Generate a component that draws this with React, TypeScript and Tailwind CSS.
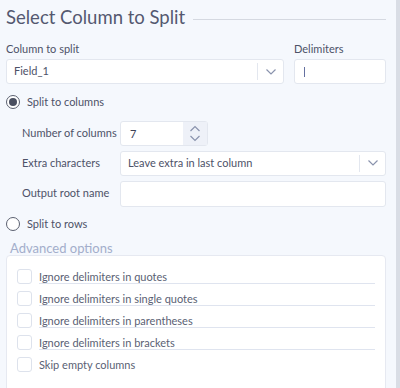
import React from "react";

const font = { fontFamily: 'Lato, "Open Sans", sans-serif' };

function Chevron() {
  return (
    <svg width="12" height="8" viewBox="0 0 12 8" fill="none">
      <path d="M1.5 1.5 L6 6 L10.5 1.5" stroke="#8a93ad" strokeWidth="1.2" />
    </svg>
  );
}

function Radio({ checked, label }: { checked?: boolean; label: string }) {
  return (
    <div className="flex items-center gap-[7px]">
      <div className="w-[14px] h-[14px] rounded-full border border-[#5b6070] bg-white flex items-center justify-center">
        {checked && <div className="w-[8px] h-[8px] rounded-full bg-[#4a4f60]" />}
      </div>
      <span className="text-[11px] text-[#4d5268]">{label}</span>
    </div>
  );
}

function Check({ label, line }: { label: string; line?: boolean }) {
  return (
    <div className="flex items-center gap-[7px] h-[22px]">
      <div className="w-[15px] h-[15px] rounded-[3px] border border-[#dde2ec] bg-white shrink-0" />
      <div
        className={`flex-1 h-[15px] overflow-hidden text-[11px] leading-[15px] text-[#5a5f74] ${
          line ? "border-b border-[#dfe4ef]" : ""
        }`}
      >
        {label}
      </div>
    </div>
  );
}

export default function App() {
  return (
    <div style={font} className="w-[400px] h-[388px] overflow-hidden bg-[#f5f8fd] flex">
      <div className="flex-1 pl-[6px] pr-[10px] pt-[5px]">
        {/* title */}
        <div className="flex items-center gap-[8px] h-[26px]">
          <span className="text-[18.5px] text-[#545870] whitespace-nowrap">Select Column to Split</span>
          <div className="flex-1 h-[1px] bg-[#d5d9e1] mt-[2px]" />
        </div>

        {/* column + delimiters */}
        <div className="flex gap-[10px] mt-[10px]">
          <div className="w-[278px]">
            <div className="text-[11px] text-[#4d5268] h-[18px]">Column to split</div>
            <div className="h-[25px] rounded-[3px] border border-[#e3e7ef] bg-white flex items-center">
              <span className="flex-1 pl-[7px] text-[11px] text-[#4d5268]">Field_1</span>
              <div className="w-[1px] h-[17px] bg-[#e3e7ef]" />
              <div className="w-[25px] flex justify-center">
                <Chevron />
              </div>
            </div>
          </div>
          <div className="flex-1">
            <div className="text-[11px] text-[#4d5268] h-[18px]">Delimiters</div>
            <div className="h-[25px] rounded-[3px] border border-[#e3e7ef] bg-white flex items-center pl-[9px]">
              <div className="w-[1px] h-[10px] bg-[#6470a0]" />
            </div>
          </div>
        </div>

        <div className="mt-[10px]">
          <Radio checked label="Split to columns" />
        </div>

        <div className="pl-[16px] mt-[10px] flex flex-col gap-[5px]">
          <div className="flex items-center">
            <span className="w-[98px] whitespace-nowrap text-[11px] text-[#4d5268]">Number of columns</span>
            <div className="flex h-[25px] w-[88px] rounded-[3px] border border-[#e3e7ef] bg-white">
              <span className="flex-1 pl-[9px] text-[11px] text-[#3d4258] leading-[23px]">7</span>
              <div className="w-[24px] bg-[#eef1f8] flex flex-col items-center justify-center">
                <svg width="12" height="7" viewBox="0 0 12 7" fill="none">
                  <path d="M1.5 6 L6 1.5 L10.5 6" stroke="#8a93ad" strokeWidth="1.2" />
                </svg>
                <div className="h-[3px]" />
                <svg width="12" height="7" viewBox="0 0 12 7" fill="none">
                  <path d="M1.5 1 L6 5.5 L10.5 1" stroke="#8a93ad" strokeWidth="1.2" />
                </svg>
              </div>
            </div>
          </div>
          <div className="flex items-center">
            <span className="w-[98px] whitespace-nowrap text-[11px] text-[#4d5268]">Extra characters</span>
            <div className="flex-1 h-[25px] rounded-[3px] border border-[#e3e7ef] bg-white flex items-center">
              <span className="flex-1 pl-[7px] text-[11px] text-[#4d5268]">Leave extra in last column</span>
              <div className="w-[1px] h-[17px] bg-[#e3e7ef]" />
              <div className="w-[25px] flex justify-center">
                <Chevron />
              </div>
            </div>
          </div>
          <div className="flex items-center">
            <span className="w-[98px] whitespace-nowrap text-[11px] text-[#4d5268]">Output root name</span>
            <div className="flex-1 h-[26px] rounded-[3px] border border-[#e3e7ef] bg-white" />
          </div>
        </div>

        <div className="mt-[9px]">
          <Radio label="Split to rows" />
        </div>

        <div className="mt-[8px] pl-[4px] text-[13px] text-[#a3aecb] leading-[16px]">Advanced options</div>
        <div className="mt-[-1px] h-[140px] rounded-[4px] border border-[#e6e9f1] bg-white pl-[10px] pr-[10px] pt-[9px]">
          <Check line label="Ignore delimiters in quotes" />
          <Check line label="Ignore delimiters in single quotes" />
          <Check line label="Ignore delimiters in parentheses" />
          <Check line label="Ignore delimiters in brackets" />
          <Check label="Skip empty columns" />
        </div>
      </div>
      <div className="w-[4px] bg-[#d9dde5]" />
    </div>
  );
}
